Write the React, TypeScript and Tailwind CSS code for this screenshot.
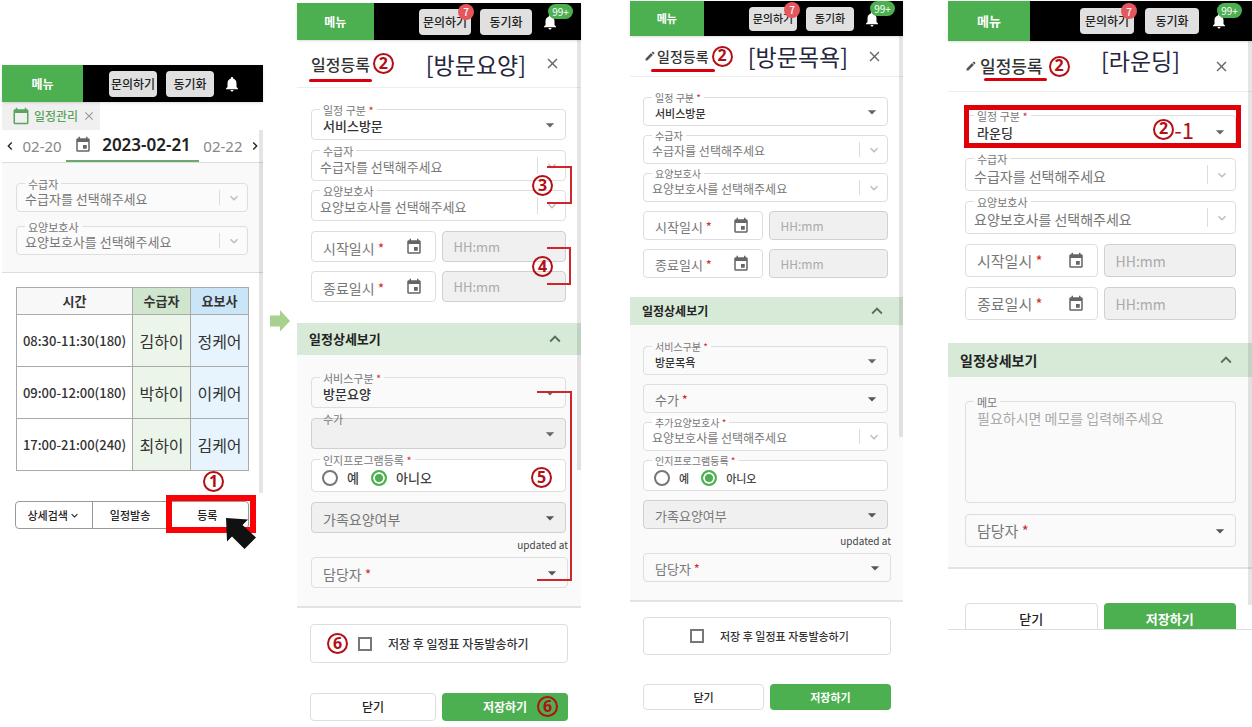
import clsx from "clsx";
import type { ReactNode } from "react";
import { createContext, useContext, useId, useState } from "react";
import {
  MdArrowDropDown,
  MdCalendarToday,
  MdClose,
  MdEdit,
  MdEvent,
  MdExpandLess,
  MdKeyboardArrowDown,
  MdKeyboardArrowLeft,
  MdKeyboardArrowRight,
  MdNotifications,
} from "react-icons/md";

type Size = "compact" | "sm" | "md" | "lg";

const medium = {
  header: "h-[37px]",
  bar: "gap-[9px] pr-[22px]",
  menu: "text-[12px]",
  headerButton: "h-[26px] w-[52px] text-[12px]",
  titleRow: "h-12 pr-5 pl-3.5",
  title: "text-base",
  pencil: "mr-px",
  form: "gap-2.5 pt-[21px] pr-[15px] pb-[21px] pl-3.5",
  field: "h-[31px]",
  radioField: "h-[33px]",
  label: "text-[11px]",
  value: "text-[13px]",
  placeholder: "text-[13px]",
  large: "text-sm",
  accordion: "h-8 text-[13px]",
  details: "pt-[22px] pr-[13px] pb-[18px] pl-3.5",
  check: "h-[39px] text-[12px]",
  button: "h-7 text-[12px]",
};

const sizes = {
  compact: {
    ...medium,
    headerButton: "h-[26px] w-12 text-[12px]",
    field: "h-[29px]",
  },
  sm: {
    header: "h-[35px]",
    bar: "gap-[9px] pr-[22px]",
    menu: "text-[11px]",
    headerButton: "h-6 w-12 text-[11px]",
    titleRow: "h-[41px] pr-5 pl-3.5",
    title: "text-sm",
    pencil: "mr-px",
    form: "gap-[9px] pt-5 pr-[15px] pb-[19px] pl-[13px]",
    field: "h-[29px]",
    radioField: "h-[31px]",
    label: "text-[10px]",
    value: "text-[11px]",
    placeholder: "text-[12px]",
    large: "text-[13px]",
    accordion: "h-7 text-[12px]",
    details: "pt-[21px] pr-3 pb-[18px] pl-[13px]",
    check: "h-[38px] text-[11px]",
    button: "h-[26px] text-[11px]",
  },
  md: medium,
  lg: {
    header: "h-10",
    bar: "gap-[11px] pr-6",
    menu: "text-[13px]",
    headerButton: "h-[26px] w-[54px] text-[12px]",
    titleRow: "h-[51px] pr-[22px] pl-[17px]",
    title: "text-[17px]",
    pencil: "mr-[3px]",
    form: "gap-2.5 pt-[23px] pr-4 pb-[23px] pl-[17px]",
    field: "h-[33px]",
    radioField: "h-[35px]",
    label: "text-[11px]",
    value: "text-[13px]",
    placeholder: "text-sm",
    large: "text-[15px]",
    accordion: "h-[34px] text-sm",
    details: "gap-[11px] pt-6 pr-4 pb-5 pl-[17px]",
    check: "h-10 text-[13px]",
    button: "h-8 text-[13px]",
  },
};

const SizeContext = createContext<Size>("md");

function useSize() {
  return sizes[useContext(SizeContext)];
}

interface MarkProps {
  children: ReactNode;
  className?: string;
}

function Mark({ children, className }: Readonly<MarkProps>) {
  return (
    <span
      className={clsx(
        "z-20 flex size-[21px] shrink-0 items-center justify-center rounded-full border-2 border-[#b30f14] pb-0.5 font-['Noto_Sans',sans-serif] text-base leading-none font-bold text-[#b30f14]",
        className,
      )}
    >
      {children}
    </span>
  );
}

function Bracket({ className }: Readonly<{ className: string }>) {
  return (
    <span
      className={clsx(
        "pointer-events-none absolute z-10 border-y-2 border-r-2 border-[#d0252b]",
        className,
      )}
    />
  );
}

function Star() {
  return <span className="text-[#d32f2f]"> *</span>;
}

function TopBar({ badges = true }: Readonly<{ badges?: boolean }>) {
  const s = useSize();

  return (
    <header className={clsx("relative z-10 flex bg-black shadow", s.header)}>
      <button
        type="button"
        className={clsx(
          "bg-[#4caf50] font-bold text-white",
          badges ? "w-[27%]" : "w-[31%]",
          s.menu,
        )}
      >
        메뉴
      </button>
      <div className={clsx("flex flex-1 items-center justify-end", s.bar)}>
        <button
          type="button"
          className={clsx(
            "relative rounded bg-[#e0e0e0] font-medium whitespace-nowrap text-[#222]",
            s.headerButton,
          )}
        >
          문의하기
          {badges && (
            <span className="absolute -top-[5px] -right-[3px] flex size-4 items-center justify-center rounded-full bg-[#e5575c] text-[10px] text-white">
              7
            </span>
          )}
        </button>
        <button
          type="button"
          className={clsx(
            "rounded bg-[#e0e0e0] font-medium whitespace-nowrap text-[#222]",
            s.headerButton,
          )}
        >
          동기화
        </button>
        <button type="button" aria-label="알림" className="relative text-white">
          <MdNotifications size={18} />
          {badges && (
            <span className="absolute -top-[9px] left-[7px] flex h-[15px] w-[25px] items-center justify-center rounded-full bg-[#4caf50] text-[10px]">
              99+
            </span>
          )}
        </button>
      </div>
    </header>
  );
}

interface SelectFieldProps {
  label: string;
  value?: string;
  placeholder?: string;
  required?: boolean;
  disabled?: boolean;
  tone?: string;
}

function SelectField({
  label,
  value,
  placeholder,
  required,
  disabled,
  tone = "bg-white",
}: Readonly<SelectFieldProps>) {
  const id = useId();
  const s = useSize();

  return (
    <div
      className={clsx(
        "relative flex rounded border",
        disabled ? "border-[#d0d0d0] bg-[#f0f0f0]" : "border-[#dedede]",
        !disabled && tone,
        s.field,
      )}
    >
      <label
        htmlFor={id}
        className={clsx(
          "absolute -top-[7px] left-2 px-[3px] leading-[14px] text-[#777]",
          !disabled && tone,
          s.label,
        )}
      >
        {label}
        {required && <Star />}
      </label>
      <select
        id={id}
        disabled={disabled}
        className={clsx(
          "relative w-full appearance-none bg-transparent pt-[3px] outline-none",
          placeholder
            ? "pl-2 text-[#777]"
            : "pl-[11px] font-medium text-[#333]",
          placeholder ? s.placeholder : s.value,
        )}
      >
        <option>{placeholder ?? value}</option>
      </select>
      {placeholder ? (
        <span className="pointer-events-none absolute inset-y-1.5 right-0 flex w-7 items-center justify-center border-l border-[#ddd] text-[#bbb]">
          <MdKeyboardArrowDown size={16} />
        </span>
      ) : (
        <MdArrowDropDown
          size={20}
          className="pointer-events-none absolute right-[5px] self-center text-[#666]"
        />
      )}
    </div>
  );
}

interface EmptySelectProps {
  label: string;
  required?: boolean;
  disabled?: boolean;
}

function EmptySelect({
  label,
  required,
  disabled,
}: Readonly<EmptySelectProps>) {
  const id = useId();
  const s = useSize();

  return (
    <div
      className={clsx(
        "relative flex items-center rounded border pl-[11px]",
        disabled ? "border-[#d0d0d0] bg-[#f0f0f0]" : "border-[#dedede]",
        s.field,
      )}
    >
      <label
        htmlFor={id}
        className={clsx("pt-0.5 whitespace-nowrap text-[#777]", s.large)}
      >
        {label}
        {required && <Star />}
      </label>
      <select
        id={id}
        disabled={disabled}
        className="h-full min-w-0 flex-1 appearance-none bg-transparent outline-none"
      >
        <option value="" aria-label="선택 안 함" />
      </select>
      <MdArrowDropDown
        size={20}
        className="pointer-events-none absolute right-[5px] text-[#555]"
      />
    </div>
  );
}

function DateRow({ label }: Readonly<{ label: string }>) {
  const id = useId();
  const s = useSize();

  return (
    <div className="grid grid-cols-2 gap-1.5">
      <div
        className={clsx(
          "flex items-center rounded border border-[#dedede] bg-white pr-3 pl-[11px]",
          s.field,
        )}
      >
        <label
          htmlFor={id}
          className={clsx("pt-0.5 whitespace-nowrap text-[#777]", s.large)}
        >
          {label}
          <Star />
        </label>
        <input id={id} type="text" className="w-0 min-w-0 flex-1" />
        <button
          type="button"
          aria-label={`${label} 달력`}
          className="text-[#666]"
        >
          <MdEvent size={18} />
        </button>
      </div>
      <input
        type="text"
        disabled
        aria-label={`${label} 시간`}
        placeholder="HH:mm"
        className={clsx(
          "w-full min-w-0 rounded border border-[#d0d0d0] bg-[#f0f0f0] pl-[11px] placeholder:text-[#aaa]",
          s.field,
          s.placeholder,
        )}
      />
    </div>
  );
}

function ProgramRadio() {
  const name = useId();
  const s = useSize();
  const [value, setValue] = useState("아니오");

  return (
    <div
      role="radiogroup"
      aria-labelledby={`${name}-label`}
      className={clsx(
        "relative flex items-stretch gap-3 rounded border border-[#dedede] bg-white pt-1 pl-2.5",
        s.radioField,
      )}
    >
      <span
        id={`${name}-label`}
        className={clsx(
          "absolute -top-[7px] left-2 bg-linear-to-b from-[#fafafa] from-50% to-white to-50% px-[3px] leading-[14px] text-[#777]",
          s.label,
        )}
      >
        인지프로그램등록
        <Star />
      </span>
      {["예", "아니오"].map((option) => (
        <label
          key={option}
          className={clsx(
            "relative flex items-center gap-[9px] leading-4 font-medium text-[#444]",
            s.value,
          )}
        >
          <input
            type="radio"
            name={name}
            checked={value === option}
            onChange={() => setValue(option)}
            className="size-4 appearance-none rounded-full border-2 border-[#777] bg-white checked:border-[#4caf50] checked:bg-[#4caf50] checked:shadow-[inset_0_0_0_2px_white]"
          />
          {option}
        </label>
      ))}
    </div>
  );
}

interface TitleRowProps {
  heading: string;
  editable?: boolean;
  underline?: string;
  markGap?: string;
  headingClass?: string;
}

function TitleRow({
  heading,
  editable,
  underline = "-inset-x-0.5 -bottom-1.5",
  markGap = "ml-[3px]",
  headingClass = "mr-[18px]",
}: Readonly<TitleRowProps>) {
  const s = useSize();

  return (
    <div
      className={clsx(
        "flex items-center border-b border-[#eee] whitespace-nowrap",
        s.titleRow,
      )}
    >
      {editable && (
        <MdEdit size={12} className={clsx("shrink-0 text-[#555]", s.pencil)} />
      )}
      <h2 className={clsx("relative font-medium text-[#333]", s.title)}>
        일정등록
        <span
          className={clsx(
            "absolute h-[3px] rounded-full bg-[#d8000c]",
            underline,
          )}
        />
      </h2>
      <Mark className={markGap}>2</Mark>
      <p
        className={clsx(
          "ml-auto text-[23px] leading-8 text-[#25253d]",
          headingClass,
        )}
      >
        [{heading}]
      </p>
      <button type="button" aria-label="창 닫기" className="text-[#666]">
        <MdClose size={17} />
      </button>
    </div>
  );
}

function AccordionHeader() {
  const s = useSize();

  return (
    <button
      type="button"
      aria-expanded="true"
      className={clsx(
        "flex w-full items-center justify-between bg-[#d7ead8] pr-[15px] pl-3 font-bold text-[#222]",
        s.accordion,
      )}
    >
      일정상세보기
      <MdExpandLess size={22} className="text-[#557058]" />
    </button>
  );
}

function UpdatedAt() {
  return (
    <p className="my-1 text-right text-[10px] leading-4 text-[#444]">
      updated at
    </p>
  );
}

function AutoSend({ mark }: Readonly<{ mark?: boolean }>) {
  const s = useSize();

  return (
    <div
      className={clsx(
        "flex items-center rounded border border-[#dedede] bg-white",
        mark ? "pl-4" : "pl-[46px]",
        s.check,
      )}
    >
      {mark && <Mark className="mr-2.5">6</Mark>}
      <label className="flex items-center gap-4 font-medium whitespace-nowrap text-[#333]">
        <input
          type="checkbox"
          className="size-3.5 appearance-none border-2 border-[#777] checked:bg-[#4caf50]"
        />
        저장 후 일정표 자동발송하기
      </label>
    </div>
  );
}

function FooterButtons({ mark }: Readonly<{ mark?: boolean }>) {
  const s = useSize();

  return (
    <div className="grid grid-cols-2 gap-1.5">
      <button
        type="button"
        className={clsx(
          "rounded border border-[#dedede] bg-white font-medium text-[#222]",
          s.button,
        )}
      >
        닫기
      </button>
      <button
        type="button"
        className={clsx(
          "relative rounded bg-[#4caf50] font-bold text-white",
          s.button,
        )}
      >
        저장하기
        {mark && <Mark className="absolute top-[3px] right-2.5">6</Mark>}
      </button>
    </div>
  );
}

function ScrollThumb({ className }: Readonly<{ className: string }>) {
  return (
    <span
      className={clsx(
        "pointer-events-none absolute right-0 w-1 bg-black/10",
        className,
      )}
    />
  );
}

const visits = [
  { time: "08:30-11:30(180)", client: "김하이", carer: "정케어" },
  { time: "09:00-12:00(180)", client: "박하이", carer: "이케어" },
  { time: "17:00-21:00(240)", client: "최하이", carer: "김케어" },
];

function VisitTable() {
  return (
    <table className="w-full table-fixed border-collapse text-center whitespace-nowrap text-[#333]">
      <thead>
        <tr className="h-[27px] text-[13px]">
          <th className="w-1/2 border border-[#aaa] bg-[#f8f8f8]">시간</th>
          <th className="w-1/4 border border-[#aaa] bg-[#cfe5cd]">수급자</th>
          <th className="w-1/4 border border-[#aaa] bg-[#cbe5f8]">요보사</th>
        </tr>
      </thead>
      <tbody>
        {visits.map((visit) => (
          <tr key={visit.time} className="h-[52px] text-base">
            <td className="border border-[#aaa] bg-white text-[13px] font-medium">
              {visit.time}
            </td>
            <td className="border border-[#aaa] bg-[#ebf5ea]">
              {visit.client}
            </td>
            <td className="border border-[#aaa] bg-[#e7f4fe]">{visit.carer}</td>
          </tr>
        ))}
      </tbody>
    </table>
  );
}

function SchedulePanel() {
  return (
    <section className="relative mt-[65px]">
      <TopBar badges={false} />
      <div className="flex h-7 w-[98px] items-center gap-1 bg-[#f0f0f0] pl-2.5 text-[12px] font-medium whitespace-nowrap text-[#5aa55d]">
        <MdCalendarToday size={18} className="shrink-0" />
        일정관리
        <button type="button" aria-label="탭 닫기" className="text-[#999]">
          <MdClose size={14} />
        </button>
      </div>
      <div className="relative">
        <ScrollThumb className="top-0 h-[363px]" />
        <nav className="flex h-[33px] items-stretch justify-between border-b border-[#ddd] font-['Noto_Sans',sans-serif] text-[15px] whitespace-nowrap text-[#888]">
          <button type="button" aria-label="이전" className="text-[#222]">
            <MdKeyboardArrowLeft size={16} />
          </button>
          <button type="button">02-20</button>
          <button
            type="button"
            className="flex items-center gap-2.5 border-b-2 border-[#6aa86c] px-2 text-[17px] font-semibold text-[#222]"
          >
            <MdEvent size={18} className="text-[#666]" />
            2023-02-21
          </button>
          <button type="button">02-22</button>
          <button type="button" aria-label="다음" className="text-[#222]">
            <MdKeyboardArrowRight size={16} />
          </button>
        </nav>
        <div className="flex flex-col gap-3.5 border-b border-[#ddd] bg-[#f9f9f9] pt-5 pr-[15px] pb-[17px] pl-3.5">
          <SelectField
            label="수급자"
            placeholder="수급자를 선택해주세요"
            tone="bg-[#fbfbfb]"
          />
          <SelectField
            label="요양보호사"
            placeholder="요양보호사를 선택해주세요"
            tone="bg-[#fbfbfb]"
          />
        </div>
        <div className="px-3.5 pt-3.5">
          <VisitTable />
        </div>
      </div>
      <div className="relative mt-[30px] mr-3.5 ml-[13px] grid h-7 grid-cols-[78fr_74fr_82fr] rounded-sm border border-[#999] text-[11px] font-medium text-[#222]">
        <button
          type="button"
          className="flex items-center justify-center border-r border-[#999] whitespace-nowrap"
        >
          상세검색
          <MdKeyboardArrowDown size={13} />
        </button>
        <button type="button">일정발송</button>
        <button type="button">등록</button>
        <span className="pointer-events-none absolute -top-[7px] -right-2 h-[38px] w-[90px] border-6 border-[#fb0007]" />
        <Mark className="absolute -top-[31px] right-6">1</Mark>
        <svg
          viewBox="0 0 30 31"
          className="pointer-events-none absolute top-4 -right-2 h-[31px] w-[30px]"
          fill="#111"
        >
          <path d="M0 0 22 1.500 16.500 7 30 19.500 18.500 31 6 18.500 1 23.500Z" />
        </svg>
      </div>
    </section>
  );
}

function VisitCarePanel() {
  const s = useSize();

  return (
    <section className="relative mt-[3px]">
      <TopBar />
      <div className="relative">
        <TitleRow heading="방문요양" />
        <div className={clsx("flex flex-col", s.form)}>
          <SelectField label="일정 구분" value="서비스방문" required />
          <div className="relative flex flex-col gap-[9px]">
            <SelectField label="수급자" placeholder="수급자를 선택해주세요" />
            <SelectField
              label="요양보호사"
              placeholder="요양보호사를 선택해주세요"
            />
            <Bracket className="top-4 -right-1.5 h-[38px] w-[25px]" />
            <Mark className="absolute top-[25px] right-[13px]">3</Mark>
          </div>
          <div className="relative flex flex-col gap-[9px]">
            <DateRow label="시작일시" />
            <DateRow label="종료일시" />
            <Bracket className="top-4 -right-[5px] h-[38px] w-6" />
            <Mark className="absolute top-[25px] right-[13px]">4</Mark>
          </div>
        </div>
        <AccordionHeader />
        <div
          className={clsx(
            "relative border-b-2 border-[#e3e3e3] bg-[#fafafa]",
            s.details,
          )}
        >
          <div className="flex flex-col gap-2.5 pr-0.5">
            <SelectField
              label="서비스구분"
              value="방문요양"
              required
              tone="bg-[#fafafa]"
            />
            <SelectField label="수가" value="" disabled />
            <ProgramRadio />
            <EmptySelect label="가족요양여부" disabled />
          </div>
          <UpdatedAt />
          <EmptySelect label="담당자" required />
          <Bracket className="top-9 right-[9px] h-[190px] w-[35px]" />
          <Mark className="absolute top-28 right-[29px]">5</Mark>
        </div>
        <ScrollThumb className="top-0 h-[430px]" />
      </div>
      <div className="flex flex-col gap-[30px] px-[13px] pt-4">
        <AutoSend mark />
        <FooterButtons mark />
      </div>
    </section>
  );
}

function VisitBathPanel() {
  const s = useSize();

  return (
    <section className="relative mt-px">
      <TopBar />
      <div className="relative">
        <TitleRow
          heading="방문목욕"
          editable
          underline="-inset-x-1.5 -bottom-1.5"
        />
        <div className={clsx("flex flex-col", s.form)}>
          <SelectField label="일정 구분" value="서비스방문" required />
          <SelectField label="수급자" placeholder="수급자를 선택해주세요" />
          <SelectField
            label="요양보호사"
            placeholder="요양보호사를 선택해주세요"
          />
          <DateRow label="시작일시" />
          <DateRow label="종료일시" />
        </div>
        <AccordionHeader />
        <div
          className={clsx(
            "border-b-2 border-[#e3e3e3] bg-[#fafafa]",
            s.details,
          )}
        >
          <div className="flex flex-col gap-[9px] pr-[3px]">
            <SelectField
              label="서비스구분"
              value="방문목욕"
              required
              tone="bg-[#fafafa]"
            />
            <EmptySelect label="수가" required />
            <SelectField
              label="추가요양보호사"
              placeholder="요양보호사를 선택해주세요"
              required
            />
            <ProgramRadio />
            <EmptySelect label="가족요양여부" disabled />
          </div>
          <UpdatedAt />
          <EmptySelect label="담당자" required />
        </div>
        <ScrollThumb className="top-0 h-[401px]" />
      </div>
      <div className="flex flex-col gap-[29px] pt-[15px] pr-3 pl-[13px]">
        <AutoSend />
        <FooterButtons />
      </div>
    </section>
  );
}

function RoundingPanel() {
  const memoId = useId();
  const s = useSize();

  return (
    <section className="relative mt-px border-b border-[#ddd]">
      <TopBar />
      <div className="relative">
        <TitleRow
          heading="라운딩"
          editable
          underline="-right-1 -bottom-0.5 left-1"
          markGap="ml-1.5"
          headingClass="mr-[33px] mb-3"
        />
        <div className={clsx("flex flex-col", s.form)}>
          <div className="relative">
            <SelectField label="일정 구분" value="라운딩" required />
            <span className="pointer-events-none absolute -top-2.5 -right-[5px] bottom-0 -left-px border-5 border-[#e00008]" />
            <span className="absolute top-0 right-[42px] flex items-center text-[22px] leading-7 text-[#b30f14]">
              <Mark>2</Mark>-1
            </span>
          </div>
          <SelectField label="수급자" placeholder="수급자를 선택해주세요" />
          <SelectField
            label="요양보호사"
            placeholder="요양보호사를 선택해주세요"
          />
          <DateRow label="시작일시" />
          <DateRow label="종료일시" />
        </div>
        <AccordionHeader />
        <div
          className={clsx(
            "flex flex-col border-b-2 border-[#e3e3e3] bg-[#fafafa]",
            s.details,
          )}
        >
          <div className="relative h-[102px] rounded border border-[#dedede]">
            <label
              htmlFor={memoId}
              className="absolute -top-[7px] left-2 bg-[#fafafa] px-[3px] text-[11px] leading-[14px] text-[#777]"
            >
              메모
            </label>
            <textarea
              id={memoId}
              placeholder="필요하시면 메모를 입력해주세요"
              className="relative size-full resize-none bg-transparent px-[11px] py-1.5 text-sm outline-none placeholder:text-[#aaa]"
            />
          </div>
          <EmptySelect label="담당자" required />
        </div>
        <ScrollThumb className="top-0 h-[564px]" />
      </div>
      <div className="h-[60px] overflow-hidden pt-[34px] pr-4 pl-[17px]">
        <FooterButtons />
      </div>
    </section>
  );
}

export default function App() {
  return (
    <main className="grid min-h-screen grid-cols-[261fr_34fr_284fr_49fr_273fr_45fr_304fr] items-start bg-white pl-0.5 font-['Noto_Sans_CJK_KR',sans-serif]">
      <SizeContext.Provider value="compact">
        <SchedulePanel />
      </SizeContext.Provider>
      <svg
        viewBox="0 0 20 22"
        className="mt-[310px] h-[22px] w-5 justify-self-center"
        fill="#a9d18e"
      >
        <path d="M0 5.500H10V0L20 11 10 21.500V16.500H0Z" />
      </svg>
      <SizeContext.Provider value="md">
        <VisitCarePanel />
      </SizeContext.Provider>
      <span />
      <SizeContext.Provider value="sm">
        <VisitBathPanel />
      </SizeContext.Provider>
      <span />
      <SizeContext.Provider value="lg">
        <RoundingPanel />
      </SizeContext.Provider>
    </main>
  );
}
